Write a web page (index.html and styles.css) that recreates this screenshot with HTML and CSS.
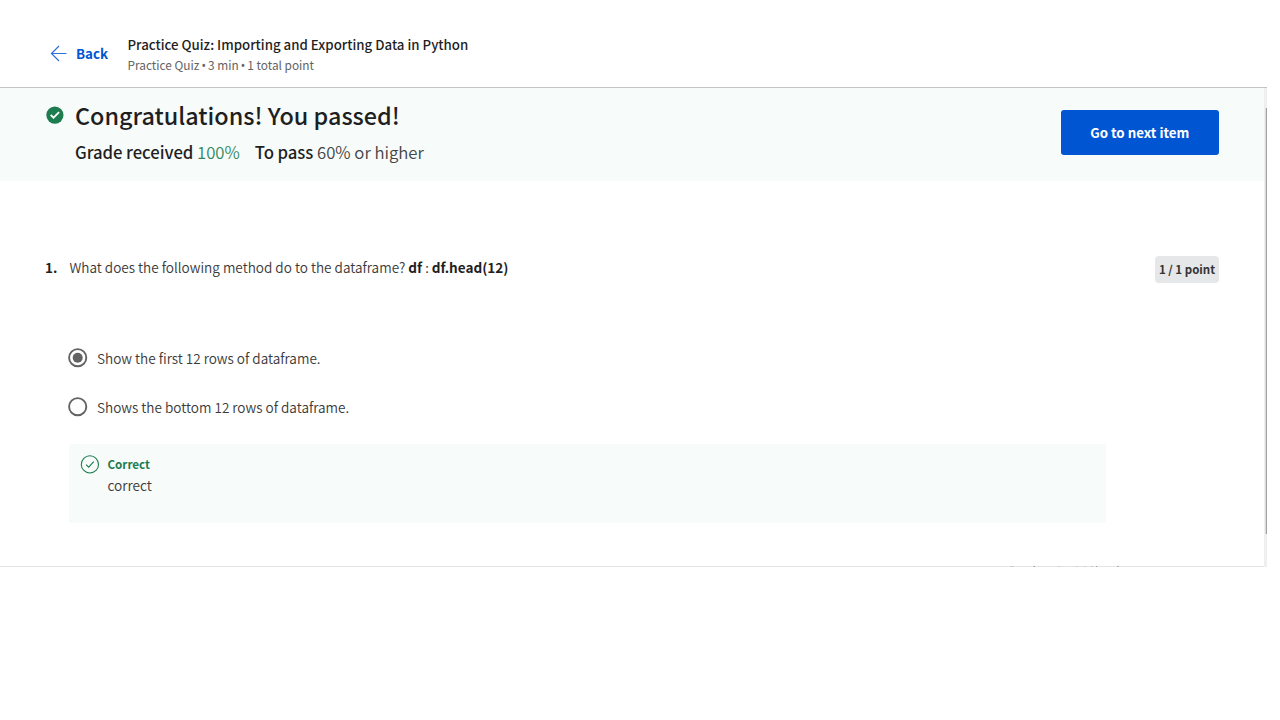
FILE: index.html
```html
<!DOCTYPE html>
<html lang="en">
<head>
<meta charset="utf-8">
<title>Practice Quiz</title>
<link rel="stylesheet" href="styles.css">
</head>
<body>
<div class="window">
  <header class="topbar">
    <a class="back">
      <svg class="back-arrow" width="18" height="18" viewBox="0 0 18 18"><path d="M16.500 8.500H1.500M9 1L1.500 8.500L9 16"/></svg>
      <span class="back-label">Back</span>
    </a>
    <div class="quiz-info">
      <div class="quiz-title"><span>Practice Quiz: Importing and Exporting Data in Python</span></div>
      <div class="quiz-meta">Practice Quiz <span class="bullet">•</span> 3 min <span class="bullet">•</span> 1 total point</div>
    </div>
  </header>
  <section class="result">
    <svg class="passed-icon" width="18" height="18" viewBox="0 0 18 18"><circle cx="8.900" cy="9.100" r="8.600"/><path d="M4.700 8.900L7.500 11.700L13.100 6.100"/></svg>
    <div class="result-text">
      <h1 class="headline"><span>Congratulations! You passed!</span></h1>
      <div class="grades">
        <span class="grade"><b>Grade received</b> <span class="score">100%</span></span>
        <span class="grade"><b>To pass</b> 60% or higher</span>
      </div>
    </div>
    <button class="next"><span>Go to next item</span></button>
  </section>
  <main class="question">
    <div class="number">1.</div>
    <div class="body">
      <div class="prompt"><span>What does the following method do to the dataframe? <b>df</b> : <b>df.head(12)</b></span></div>
      <div class="option"><svg class="radio" width="20" height="20" viewBox="0 0 20 20"><circle cx="9.700" cy="9.700" r="8.600"/><circle class="dot" cx="9.700" cy="9.700" r="5"/></svg><span>Show the first 12 rows of dataframe.</span></div>
      <div class="option"><svg class="radio" width="20" height="20" viewBox="0 0 20 20"><circle cx="9.700" cy="9.700" r="8.600"/></svg><span>Shows the bottom 12 rows of dataframe.</span></div>
      <div class="feedback">
        <svg class="correct-icon" width="20" height="20" viewBox="0 0 20 20"><circle cx="9.900" cy="10.400" r="8.600"/><path d="M6.100 10.700L8.700 13.200L13.700 7.700"/></svg>
        <div>
          <div class="verdict"><span>Correct</span></div>
          <div class="explain"><span>correct</span></div>
        </div>
      </div>
    </div>
    <div class="points"><span>1 / 1 point</span></div>
  </main>
  <svg class="cutoff" width="120" height="2" viewBox="0 0 120 2"><path d="M2 1.500h4M25 1.500h2M50 1.500h2M68 1.500h2M76 1.500h2M83 1.500h2M109 1.500h2"/><path class="dark" d="M26 1.500h1M88 1.500h1M109.500 1.500h1"/></svg>
  <div class="scrollbar"><div class="thumb"></div></div>
</div>
</body>
</html>
```
FILE: styles.css
```css
* { box-sizing: border-box; }
body {
  margin: 0;
  background: #fff;
  color: #1f1f1f;
  font-family: "Noto Sans CJK SC", "Noto Sans", sans-serif;
  overflow: hidden;
}
.window {
  position: relative;
  width: 1267px;
  height: 567px;
  border-bottom: 1px solid #e4e4e4;
}
.topbar {
  display: flex;
  height: 88px;
  padding: 35px 0 0 50px;
  border-bottom: 1px solid #c4c4c4;
}
.back { display: flex; width: 77.500px; padding-top: 9px; color: #0056d2; }
.back-arrow { margin-top: 1px; fill: none; stroke: #2a70da; stroke-width: 1.2; }
.back-label { margin-left: 8px; font-size: 13.350px; font-weight: 700; line-height: 20px; }
.quiz-title { font-size: 13.280px; font-weight: 500; line-height: 20px; white-space: nowrap; }
.quiz-meta { font-size: 11.850px; line-height: 20px; color: #636363; white-space: nowrap; }
.bullet { font-family: "Noto Sans", sans-serif; margin: 0 -0.600px; }
.result {
  display: flex;
  height: 93px;
  padding: 0 46px 0 45.500px;
  background: #f7fbfa;
  margin-right: 2px;
}
.passed-icon { margin-top: 18px; fill: #1d7c50; }
.passed-icon path { fill: none; stroke: #fff; stroke-width: 1.8; }
.result-text { flex: 1; padding-left: 11.500px; }
.headline { margin: 9px 0 0; font-size: 23.380px; font-weight: 500; line-height: 36px; }
.grades { display: flex; gap: 15px; margin-top: 7px; color: #444; font-size: 16.720px; font-weight: 350; line-height: 24px; }
.grades b { color: #1f1f1f; font-weight: 500; letter-spacing: -0.050px; }
.score { color: #2f8860; }
.next {
  width: 158.500px;
  height: 45px;
  margin-top: 22px;
  padding: 0;
  border: 0;
  border-radius: 3px;
  background: #0056d2;
  color: #fff;
  font: 700 13.300px/45px "Noto Sans CJK SC", sans-serif;
}
.question { display: flex; padding: 74px 48px 0 45px; }
.number { width: 24.400px; font-size: 13.500px; font-weight: 700; line-height: 24px; }
.body { width: 1037px; color: #3a3a3a; font-size: 13.570px; font-weight: 350; line-height: 24px; }
.prompt { margin-bottom: 67px; }
.prompt b { color: #1f1f1f; }
.option { display: flex; gap: 9px; height: 24px; margin-bottom: 25px; }
.radio { margin: 2px 0 0 -1.400px; fill: none; stroke: #636363; stroke-width: 1.9; }
.radio .dot { fill: #636363; stroke: none; }
.feedback { display: flex; gap: 7px; height: 79px; padding: 10px 11px; background: #f7fbfa; }
.correct-icon { margin: 0; fill: none; stroke: #1d7c50; stroke-width: 1.1; }
.verdict { font-size: 11.650px; font-weight: 700; line-height: 20px; color: #1d7c50; }
.explain { font-size: 13.700px; line-height: 22px; }
.points {
  width: 64px;
  height: 27px;
  margin: 1px 0 0 auto;
  border-radius: 4px;
  background: #e5e7e8;
  text-align: center;
  font-size: 11.500px;
  font-weight: 700;
  line-height: 27px;
  color: #333;
}
.cutoff { position: absolute; left: 1008px; bottom: -1px; stroke: #ccc; }
.cutoff .dark { stroke: #999; }
.scrollbar { position: absolute; right: 0; top: 88px; width: 3px; height: 479px; background: #efefef; }
.thumb { width: 2px; height: 426px; margin: 20px 0 0 1px; background: #a0a0a0; border-left: 1px solid #ddd; }
```
